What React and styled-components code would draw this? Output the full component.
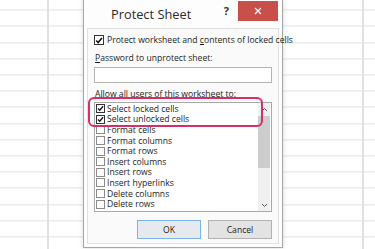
import React from 'react';
import styled, { createGlobalStyle } from 'styled-components';

const Global = createGlobalStyle`
  html, body { margin: 0; padding: 0; }
  body {
    width: 375px; height: 249px; overflow: hidden; background: #fff;
    font-family: "Open Sans", "Noto Sans", sans-serif;
  }
`;

const Sheet = styled.div`
  position: relative;
  width: 375px;
  height: 249px;
  overflow: hidden;
  background-color: #fff;
  background-image:
    linear-gradient(to right, transparent 47px, #e0e0e0 47px, #e0e0e0 49px, transparent 49px, transparent 362px, #e0e0e0 362px, #e0e0e0 364px, transparent 364px),
    repeating-linear-gradient(to bottom, transparent 0, transparent 15.2px, #e2e2e2 15.2px, #e2e2e2 16.2px);
  background-position: 0 0, 0 -5.6px;
`;

const Dialog = styled.div`
  position: absolute;
  left: 83px;
  top: -1px;
  width: 200px;
  height: 249px;
  box-sizing: border-box;
  border: 1px solid #a6a6a6;
  background: #fdfdfd;
  display: flex;
  flex-direction: column;
  box-shadow: 0 0 5px rgba(0, 0, 0, 0.15);
`;

const TitleBar = styled.div`
  height: 28px;
  display: flex;
  align-items: flex-start;
  flex: none;
`;

const Title = styled.div`
  padding-left: 27px;
  margin-top: 4px;
  font-size: 12.8px;
  line-height: 20px;
  color: #2b2b2b;
  flex: 1;
`;

const Help = styled.div`
  margin-top: 5px;
  font-size: 11px;
  line-height: 12px;
  font-weight: 700;
  color: #333;
  margin-right: 9px;
`;

const CloseButton = styled.div`
  width: 40px;
  height: 20px;
  margin-top: 1px;
  margin-right: 4px;
  background: #c94f4a;
  display: flex;
  align-items: center;
  justify-content: center;
`;

const Panel = styled.div`
  flex: 1;
  margin: 0 3px 3px 3px;
  border: 1px solid #e0e0e0;
  background: #fafafa;
  padding: 6px 6px 0 6px;
  display: flex;
  flex-direction: column;
  font-size: 8.6px;
  color: #1c1c1c;
`;

const CheckRow = styled.div`
  display: flex;
  align-items: center;
  gap: 3px;
  height: 10px;
  line-height: 10px;
  white-space: nowrap;
`;

const Box = styled.div`
  flex: none;
  width: ${p => p.$size}px;
  height: ${p => p.$size}px;
  box-sizing: border-box;
  border: 1px solid ${p => (p.$checked ? '#333' : '#8a8a8a')};
  background: #fff;
  display: flex;
  align-items: center;
  justify-content: center;
`;

const Label = styled.div`
  margin-top: ${p => p.$mt}px;
  padding-left: 1px;
  line-height: 11px;
  white-space: nowrap;
`;

const Input = styled.div`
  margin-top: 3px;
  height: 16px;
  box-sizing: border-box;
  border: 1px solid #b4b4b4;
  background: #fff;
`;

const ListBox = styled.div`
  margin-top: 2px;
  height: 110px;
  box-sizing: border-box;
  border: 1px solid #a9a9a9;
  background: #fff;
  display: flex;
`;

const Items = styled.div`
  flex: 1;
  padding: 0.5px 0 0 1px;
  display: flex;
  flex-direction: column;
`;

const Item = styled.div`
  height: 10.6px;
  flex: none;
  display: flex;
  align-items: center;
  gap: 2px;
  white-space: nowrap;
  line-height: 10px;
`;

const Scrollbar = styled.div`
  width: 12px;
  margin-right: 1px;
  background: #f0f0f0;
  display: flex;
  flex-direction: column;
  align-items: center;
`;

const Arrow = styled.div`
  height: 12px;
  display: flex;
  align-items: center;
  justify-content: center;
  flex: none;
`;

const Thumb = styled.div`
  width: 12px;
  height: 52px;
  margin-top: 1px;
  background: #cdcdcd;
`;

const Track = styled.div`
  flex: 1;
`;

const Buttons = styled.div`
  margin-top: 8px;
  display: flex;
  justify-content: flex-end;
  gap: 7px;
`;

const Button = styled.div`
  width: 64px;
  height: 19px;
  box-sizing: border-box;
  border: 1px solid ${p => (p.$primary ? '#7fb2e5' : '#b2b2b2')};
  background: ${p => (p.$primary ? '#e6e9ee' : '#e3e3e3')};
  display: flex;
  align-items: center;
  justify-content: center;
  font-size: 8.6px;
  color: #1c1c1c;
`;

const Highlight = styled.div`
  position: absolute;
  left: 4px;
  top: 97px;
  width: 175px;
  height: 30px;
  box-sizing: border-box;
  border: 2px solid #d92d66;
  border-radius: 6px;
  pointer-events: none;
`;

const Check = () => (
  <svg width="9" height="9" viewBox="0 0 9 9">
    <path d="M1.3 4.6 L3.5 6.8 L7.8 1.6" fill="none" stroke="#111" strokeWidth="1.7" />
  </svg>
);

const CheckBox = ({ checked, size }) => (
  <Box $checked={checked} $size={size}>{checked && <Check />}</Box>
);

const items = [
  ['Select locked cells', true],
  ['Select unlocked cells', true],
  ['Format cells', false],
  ['Format columns', false],
  ['Format rows', false],
  ['Insert columns', false],
  ['Insert rows', false],
  ['Insert hyperlinks', false],
  ['Delete columns', false],
  ['Delete rows', false],
];

export default function App() {
  return (
    <Sheet>
      <Global />
      <Dialog>
        <TitleBar>
          <Title>Protect Sheet</Title>
          <Help>?</Help>
          <CloseButton>
            <svg width="8" height="8" viewBox="0 0 8 8">
              <path d="M1 1 L7 7 M7 1 L1 7" stroke="#fff" strokeWidth="1.2" />
            </svg>
          </CloseButton>
        </TitleBar>
        <Panel>
          <CheckRow>
            <CheckBox checked size={10} />
            <span>Protect worksheet and <u>c</u>ontents of locked cells</span>
          </CheckRow>
          <Label $mt={8}><u>P</u>assword to unprotect sheet:</Label>
          <Input />
          <Label $mt={6}>Allo<u>w</u> all users of this worksheet to:</Label>
          <ListBox>
            <Items>
              {items.map(([t, c]) => (
                <Item key={t}>
                  <CheckBox checked={c} size={9} />
                  <span>{t}</span>
                </Item>
              ))}
            </Items>
            <Scrollbar>
              <Arrow>
                <svg width="7" height="5" viewBox="0 0 7 5">
                  <path d="M1 4 L3.5 1.5 L6 4" fill="none" stroke="#555" strokeWidth="1" />
                </svg>
              </Arrow>
              <Thumb />
              <Track />
              <Arrow>
                <svg width="7" height="5" viewBox="0 0 7 5">
                  <path d="M1 1 L3.5 3.5 L6 1" fill="none" stroke="#555" strokeWidth="1" />
                </svg>
              </Arrow>
            </Scrollbar>
          </ListBox>
          <Buttons>
            <Button $primary>OK</Button>
            <Button>Cancel</Button>
          </Buttons>
        </Panel>
        <Highlight />
      </Dialog>
    </Sheet>
  );
}
